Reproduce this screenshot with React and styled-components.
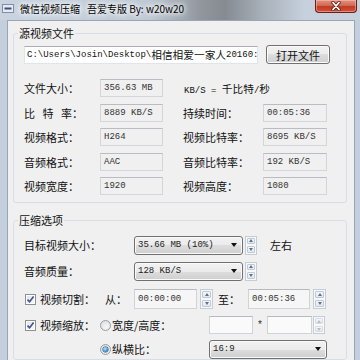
import React from 'react';
import styled, { createGlobalStyle } from 'styled-components';

const GlobalStyle = createGlobalStyle`
  html, body {
    margin: 0;
    padding: 0;
  }
  body {
    width: 360px;
    height: 360px;
    overflow: hidden;
    background: #c3cfdc;
    font-family: "Noto Sans CJK SC", "Noto Sans", sans-serif;
  }
  * {
    box-sizing: border-box;
  }
`;

const Window = styled.div`
  width: 360px;
  height: 360px;
  display: flex;
  flex-direction: column;
  background: #c3cfdc;
  overflow: hidden;
`;

const TitleBar = styled.div`
  height: 20px;
  flex: none;
  display: flex;
  align-items: flex-start;
  padding-left: 2px;
  background: linear-gradient(90deg, #c9d4e0 0px, #bfc9d4 150px, #92979e 200px, #868b92 225px, #aab2bb 265px, #c6d1dd 305px);
`;

const AppIcon = styled.svg`
  margin-top: 4px;
  flex: none;
`;

const Title = styled.div`
  margin-left: 6px;
  margin-top: 2px;
  font-size: 10px;
  line-height: 13px;
  color: #000;
  white-space: pre;
  text-shadow: 0 0 4px #fff, 0 0 6px #fff, 0 0 8px rgba(255, 255, 255, 0.8);
`;

const TitleGap = styled.span`
  display: inline-block;
  width: 7px;
`;

const CloseButton = styled.div`
  margin-left: auto;
  margin-right: 3px;
  width: 42px;
  height: 13px;
  display: flex;
  align-items: center;
  justify-content: center;
  border: 1px solid #6a1f17;
  border-top: none;
  border-radius: 0 0 4px 4px;
  background: linear-gradient(#e3907e 0%, #d36a55 45%, #c13a24 55%, #d3533b 100%);
  box-shadow: inset 0 0 0 1px rgba(255, 210, 200, 0.45);
`;

const Body = styled.div`
  flex: 1;
  display: flex;
  padding: 0 5px 0 7px;
`;

const Client = styled.div`
  flex: 1;
  display: flex;
  flex-direction: column;
  background: #f0f0f0;
  border: 1px solid #98a6b6;
  border-bottom: none;
  padding: 12px 7px 0 5px;
`;

const Group = styled.div`
  display: flex;
  flex-direction: column;
  border: 1px solid #d5dfe5;
  border-radius: 3px;
  padding: 0 0 ${(p) => p.$pb || 0}px 10px;
  margin-top: ${(p) => p.$mt || 0}px;
  flex: ${(p) => (p.$grow ? 1 : 'none')};
`;

const Caption = styled.div`
  align-self: flex-start;
  margin: -7px 0 0 -6px;
  padding: 0 1px;
  background: #f0f0f0;
  font-size: 11px;
  line-height: 13px;
  color: #111;
`;

const PathRow = styled.div`
  display: flex;
  align-items: center;
  margin-top: 5px;
`;

const PathBox = styled.div`
  width: 234px;
  height: 18px;
  display: flex;
  align-items: center;
  padding-left: 2px;
  overflow: hidden;
  white-space: pre;
  background: #fff;
  border: 1px solid #e0e5eb;
  border-top-color: #abadb3;
  font-family: "Liberation Mono", monospace;
  font-size: 9px;
  color: #111;
`;

const Wide = styled.span`
  font-family: "Noto Sans CJK SC", sans-serif;
  font-size: 10.7px;
`;

const Button = styled.div`
  margin-left: 8px;
  width: 64px;
  height: 19px;
  display: flex;
  align-items: center;
  justify-content: center;
  border: 1px solid #707070;
  border-radius: 3px;
  background: linear-gradient(#f2f2f2 0%, #ebebeb 50%, #dddddd 50%, #cfcfcf 100%);
  box-shadow: inset 0 0 0 1px #fbfbfb;
  font-size: 11px;
  color: #111;
`;

const InfoGrid = styled.div`
  margin-top: 15px;
  display: grid;
  grid-template-columns: 76px 63px 100px 64px;
  grid-auto-rows: 18px;
  row-gap: 6.5px;
  align-items: center;
`;

const Label = styled.div`
  width: ${(p) => (p.$w ? `${p.$w}px` : 'auto')};
  margin-left: ${(p) => p.$ml || 0}px;
  padding-left: ${(p) => p.$indent || 0}px;
  flex: none;
  font-size: 11px;
  line-height: 18px;
  color: #111;
  white-space: pre;
  word-spacing: ${(p) => (p.$spread ? '5px' : 'normal')};
`;

const Unit = styled.div`
  grid-column: span 2;
  padding-left: 21px;
  white-space: pre;
  font-family: "Liberation Mono", monospace;
  font-size: 9px;
  color: #111;
`;

const ValueBox = styled.div`
  height: 18px;
  display: flex;
  align-items: center;
  padding-left: 3px;
  background: #f0f0f0;
  border: 1px solid #d2d5d9;
  border-top-color: #b9bcc0;
  font-family: "Liberation Mono", monospace;
  font-size: 9px;
  color: #333;
  white-space: pre;
`;

const Rows = styled.div`
  display: flex;
  flex-direction: column;
  margin-top: 8px;
`;

const Row = styled.div`
  display: flex;
  align-items: center;
  height: 20px;
  margin-top: ${(p) => p.$mt || 0}px;
  padding-left: ${(p) => p.$pl || 0}px;
`;

const Combo = styled.div`
  width: ${(p) => p.$w}px;
  height: 19px;
  flex: none;
  display: flex;
  align-items: center;
  justify-content: space-between;
  padding: 0 5px 0 3px;
  border: 1px solid #707070;
  border-radius: 3px;
  background: linear-gradient(#f2f2f2 0%, #ebebeb 50%, #dddddd 50%, #cfcfcf 100%);
  box-shadow: inset 0 0 0 1px #fafafa;
  font-family: "Liberation Mono", monospace;
  font-size: 9px;
  color: #222;
  white-space: pre;
`;

const DropArrow = styled.span`
  width: 0;
  height: 0;
  border-left: 3.5px solid transparent;
  border-right: 3.5px solid transparent;
  border-top: 4px solid #111;
`;

const Spin = styled.div`
  width: ${(p) => p.$w || 12}px;
  height: ${(p) => p.$h || 19}px;
  margin-left: ${(p) => p.$ml || 0}px;
  flex: none;
  display: flex;
  flex-direction: column;
  border: 1px solid #c5ccd4;
  background: #f7f8fa;
`;

const SpinHalf = styled.div`
  flex: 1;
  margin: 1px;
  display: flex;
  align-items: center;
  justify-content: center;
  border: 1px solid ${(p) => (p.$off ? '#d9dde2' : '#bdc9d6')};
  border-radius: 1px;
  background: linear-gradient(#f5f7fa, #e2e8ef);
`;

const SpinArrow = styled.span`
  width: 0;
  height: 0;
  border-left: 2.5px solid transparent;
  border-right: 2.5px solid transparent;
  ${(p) => (p.$down ? 'border-top' : 'border-bottom')}: 3px solid ${(p) => (p.$off ? '#b8c0ca' : '#5d7089')};
`;

const TimeBox = styled.div`
  width: ${(p) => p.$w}px;
  height: ${(p) => p.$h || 20}px;
  flex: none;
  display: flex;
  align-items: center;
  padding-left: 3px;
  background: ${(p) => p.$bg || '#f6f6f6'};
  border: 1px solid #d0d4d9;
  border-top-color: #b6babf;
  font-family: "Liberation Mono", monospace;
  font-size: 9px;
  color: #333;
`;

const Star = styled.div`
  width: 14px;
  flex: none;
  text-align: center;
  font-family: "Liberation Mono", monospace;
  font-size: 10px;
  color: #333;
`;

const CheckBox = styled.div`
  width: 11px;
  height: 11px;
  flex: none;
  margin-left: 1px;
  margin-right: 4px;
  display: flex;
  align-items: center;
  justify-content: center;
  border: 1px solid #8e8f8f;
  background: linear-gradient(135deg, #dfe2e6, #fbfbfb);
  box-shadow: inset 0 0 0 1px #fff;
`;

const Radio = styled.div`
  width: 11px;
  height: 11px;
  flex: none;
  border-radius: 50%;
  display: flex;
  align-items: center;
  justify-content: center;
  border: 1px solid #9a9c9e;
  background: radial-gradient(circle at 60% 65%, #f8f8f8, #d6d9dd);
`;

const RadioDot = styled.span`
  width: 5px;
  height: 5px;
  border-radius: 50%;
  background: radial-gradient(circle at 40% 35%, #bfe6ff, #3b8fd9 60%, #1b4e90);
  box-shadow: 0 0 0 0.5px #1d3f70;
`;

const SpinButton = ({ w, h, ml, off }) => (
  <Spin $w={w} $h={h} $ml={ml}>
    <SpinHalf $off={off}>
      <SpinArrow $off={off} />
    </SpinHalf>
    <SpinHalf $off={off}>
      <SpinArrow $down $off={off} />
    </SpinHalf>
  </Spin>
);

const Check = () => (
  <CheckBox>
    <svg width="9" height="9" viewBox="0 0 9 9">
      <path d="M1.5 4.6 L3.6 6.8 L7.6 1.6" fill="none" stroke="#3c5394" strokeWidth="1.6" />
    </svg>
  </CheckBox>
);

const info = [
  ['比 特 率：', '8889 KB/S', '持续时间：', '00:05:36'],
  ['视频格式：', 'H264', '视频比特率：', '8695 KB/S'],
  ['音频格式：', 'AAC', '音频比特率：', '192 KB/S'],
  ['视频宽度：', '1920', '视频高度：', '1080'],
];

export default function App() {
  return (
    <Window>
      <GlobalStyle />
      <TitleBar>
        <AppIcon width="12" height="9" viewBox="0 0 12 9">
          <rect x="0.5" y="0.5" width="11" height="8" fill="#e4ebf3" stroke="#7d8fa7" />
          <rect x="2.5" y="3.5" width="7" height="2" fill="#3b4f82" />
        </AppIcon>
        <Title>
          微信视频压缩<TitleGap />吾爱专版 By: w20w20
        </Title>
        <CloseButton>
          <svg width="12" height="10" viewBox="0 0 12 10">
            <path d="M3 1.5 L9 8.5 M9 1.5 L3 8.5" stroke="#5a1810" strokeWidth="3.4" strokeLinecap="round" />
            <path d="M3 1.5 L9 8.5 M9 1.5 L3 8.5" stroke="#fff" strokeWidth="1.8" strokeLinecap="round" />
          </svg>
        </CloseButton>
      </TitleBar>
      <Body>
        <Client>
          <Group $pb={7}>
            <Caption>源视频文件</Caption>
            <PathRow>
              <PathBox>
                C:\Users\Josin\Desktop\<Wide>相信相爱一家人</Wide>20160:
              </PathBox>
              <Button>打开文件</Button>
            </PathRow>
            <InfoGrid>
              <Label>文件大小：</Label>
              <ValueBox>356.63 MB</ValueBox>
              <Unit>
                KB/S = <Wide>千比特</Wide>/<Wide>秒</Wide>
              </Unit>
              {info.map(([l1, v1, l2, v2]) => (
                <React.Fragment key={l1}>
                  <Label $spread={l1.includes(' ')}>{l1}</Label>
                  <ValueBox>{v1}</ValueBox>
                  <Label $indent={20}>{l2}</Label>
                  <ValueBox>{v2}</ValueBox>
                </React.Fragment>
              ))}
            </InfoGrid>
          </Group>

          <Group $mt={17} $grow>
            <Caption>压缩选项</Caption>
            <Rows>
              <Row>
                <Label $w={110}>目标视频大小：</Label>
                <Combo $w={109}>
                  35.66 MB (10%)
                  <DropArrow />
                </Combo>
                <SpinButton ml={2} />
                <Label $ml={13}>左右</Label>
              </Row>
              <Row $mt={6}>
                <Label $w={110}>音频质量：</Label>
                <Combo $w={109}>
                  128 KB/S
                  <DropArrow />
                </Combo>
                <SpinButton ml={2} />
              </Row>
              <Row $mt={8}>
                <Check />
                <Label $w={65}>视频切割：</Label>
                <Label $w={29}>从：</Label>
                <TimeBox $w={63}>00:00:00</TimeBox>
                <SpinButton ml={3} w={13} h={20} />
                <Label $ml={5} $w={30}>至：</Label>
                <TimeBox $w={62}>00:05:36</TimeBox>
                <SpinButton ml={3} w={13} h={20} />
              </Row>
              <Row $mt={6}>
                <Check />
                <Label $w={60}>视频缩放：</Label>
                <Radio />
                <Label $ml={1} $w={97}>宽度/高度：</Label>
                <TimeBox $w={44} $h={18} $bg="#fafafa" />
                <Star>*</Star>
                <TimeBox $w={45} $h={18} $bg="#fafafa" />
                <SpinButton ml={1} h={18} off />
              </Row>
              <Row $mt={4} $pl={76}>
                <Radio>
                  <RadioDot />
                </Radio>
                <Label $ml={1} $w={97}>纵横比：</Label>
                <Combo $w={118}>
                  16:9
                  <DropArrow />
                </Combo>
              </Row>
            </Rows>
          </Group>
        </Client>
      </Body>
    </Window>
  );
}
